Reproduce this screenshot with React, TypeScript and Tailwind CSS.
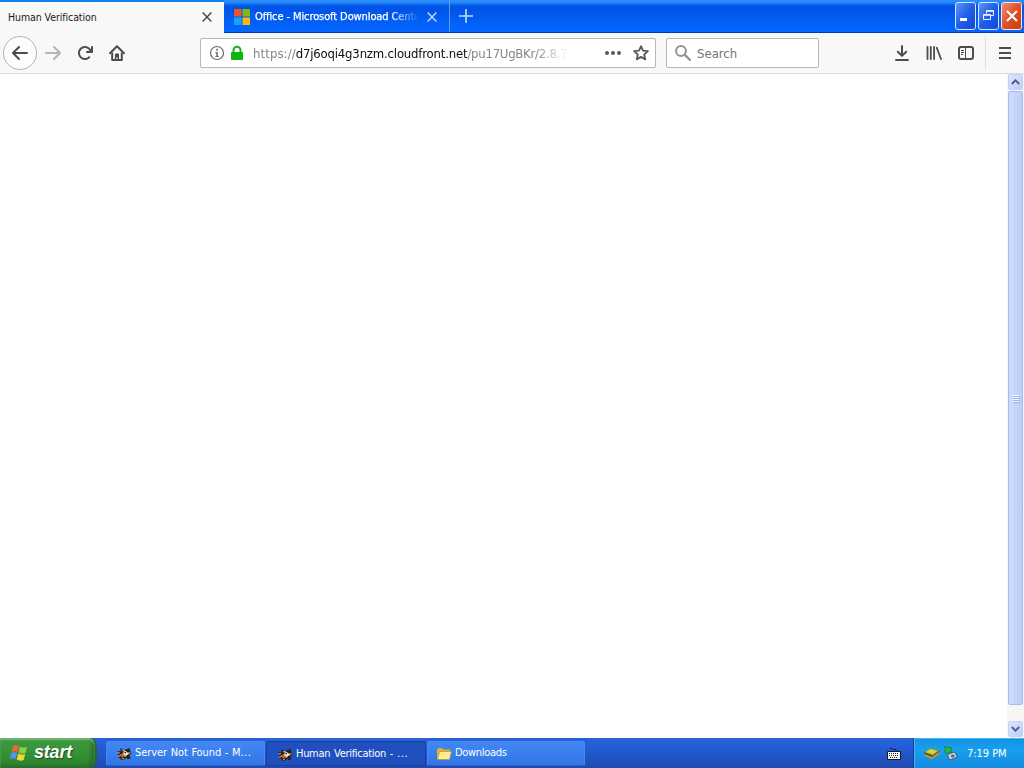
import type { ReactNode } from "react";

const TAHOMA = "font-['DejaVu_Sans_Condensed','DejaVu_Sans',sans-serif] [font-stretch:condensed]";

function Icon({ children, className = "" }: { children: ReactNode; className?: string }) {
  return (
    <svg viewBox="0 0 16 16" fill="currentColor" className={`size-4 shrink-0 ${className}`}>
      {children}
    </svg>
  );
}

function CloseIcon({ className = "" }: { className?: string }) {
  return (
    <svg viewBox="0 0 10 10" className={`size-[10px] shrink-0 ${className}`}>
      <path d="M.6.6l8.8 8.8M9.4.6L.6 9.4" stroke="currentColor" strokeWidth="1.4" />
    </svg>
  );
}

function TabStrip() {
  return (
    <div className="flex h-[33px] shrink-0 border-b border-[#003bb0] bg-linear-to-b from-[#2b8dfb] from-5% via-[#0052e4] via-20% to-[#0465fe] to-90%">
      <div className="-mb-px flex w-[224px] items-center border-t-2 border-[#1380ee] bg-[#f8f8f9] pb-px pl-2 pr-3">
        <span className="w-[194px] pt-[2px] text-[10.5px] tracking-[-0.08px] text-[#18181a]">Human Verification</span>
        <CloseIcon className="text-[#444]" />
      </div>
      <div className="flex w-[226px] items-center border-r border-[#5b9af8] pl-[10px] pr-3 pt-px">
        <svg viewBox="0 0 16 16" className="mr-[5px] size-4 shrink-0">
          <path d="M0 0h7.5v7.5H0z" fill="#ee5230" />
          <path d="M8.5 0H16v7.5H8.500z" fill="#7eba12" />
          <path d="M0 8.500h7.500V16H0z" fill="#16a4ef" />
          <path d="M8.500 8.500H16V16H8.500z" fill="#fbb80d" />
        </svg>
        <span className="mr-[8px] w-[164px] overflow-hidden whitespace-nowrap pt-[2px] text-[11px] tracking-[-0.1px] text-white [-webkit-text-stroke:0.25px_white] [mask-image:linear-gradient(to_right,black_82%,transparent)]">
          Office - Microsoft Download Center
        </span>
        <CloseIcon className="text-[#c5dcff]" />
      </div>
      <svg viewBox="0 0 14 14" className="ml-[9px] mt-[9px] size-[14px]">
        <path d="M7 0v14M0 7h14" stroke="#c5dcff" strokeWidth="1.6" />
      </svg>
      <div className="ml-auto mr-[2px] mt-[2px] flex gap-[2px]">
        <div className="h-7 w-[21px] rounded-[3px] border border-[#d7e5ff] bg-linear-to-br from-[#5b93fa] via-[#205de8] to-[#0f4bd6]">
          <div className="ml-1 mt-[15px] h-[3px] w-[7px] bg-white" />
        </div>
        <div className="flex h-7 w-[21px] items-center justify-center rounded-[3px] border border-[#d7e5ff] bg-linear-to-br from-[#5b93fa] via-[#205de8] to-[#0f4bd6]">
          <svg viewBox="0 0 11 11" className="mb-px size-[11px]">
            <path d="M3.500 3.500v-3h7v5h-3M.5 4.500h7v5h-7zM.5 5.300h7M3.500 1.300h7" fill="none" stroke="#e9f1ff" />
          </svg>
        </div>
        <div className="flex h-7 w-[21px] items-center justify-center rounded-[3px] border border-[#ffe2da] bg-linear-to-br from-[#ee8f70] via-[#de5026] to-[#c93c11]">
          <svg viewBox="0 0 12 12" className="mb-px size-3">
            <path d="M1 1l10 10M11 1L1 11" stroke="white" strokeWidth="2.100" />
          </svg>
        </div>
      </div>
    </div>
  );
}

function Toolbar() {
  return (
    <div className="flex h-[41px] shrink-0 items-center border-b border-[#dcdcdd] bg-[#f8f8f9] text-[#4c4c4f]">
      <div className="ml-[3px] flex size-[34px] items-center justify-center rounded-full border border-[#b2b2b3] bg-[#fdfdfd]">
        <Icon>
          <path d="M15 7H3.414l4.293-4.293a1 1 0 0 0-1.414-1.414l-6 6a1 1 0 0 0 0 1.414l6 6a1 1 0 0 0 1.414-1.414L3.414 9H15a1 1 0 0 0 0-2z" />
        </Icon>
      </div>
      <Icon className="ml-2 -scale-x-100 text-[#b5b5b7]">
        <path d="M15 7H3.414l4.293-4.293a1 1 0 0 0-1.414-1.414l-6 6a1 1 0 0 0 0 1.414l6 6a1 1 0 0 0 1.414-1.414L3.414 9H15a1 1 0 0 0 0-2z" />
      </Icon>
      <Icon className="ml-4">
        <path d="M15 1a1 1 0 0 0-1 1v2.418A6.995 6.995 0 1 0 8 15a6.954 6.954 0 0 0 4.950-2.050 1 1 0 0 0-1.414-1.414A5.019 5.019 0 1 1 12.549 6H10a1 1 0 0 0 0 2h5a1 1 0 0 0 1-1V2a1 1 0 0 0-1-1z" />
      </Icon>
      <Icon className="ml-4">
        <path d="M1 8.200L8 1.300l7 6.900" fill="none" stroke="currentColor" strokeWidth="2" strokeLinecap="round" strokeLinejoin="round" />
        <path d="M3.200 7.500V15h9.600V7.500" fill="none" stroke="currentColor" strokeWidth="2" strokeLinejoin="round" />
        <path d="M6 15V9.500a1 1 0 0 1 1-1h2a1 1 0 0 1 1 1V15H8.700v-2.500H7.300V15z" />
      </Icon>

      <div className="ml-[75px] flex h-[30px] w-[456px] items-center rounded-[2px] border border-[#b7b7b8] bg-white pl-2">
        <Icon className="text-[#69696b]">
          <circle cx="8" cy="8" r="6.500" fill="none" stroke="currentColor" strokeWidth="1.200" />
          <circle cx="8" cy="4.800" r="1" />
          <path d="M6.400 6.900h2.400v4h1v1.200H6.300v-1.200h1V8h-.9z" />
        </Icon>
        <Icon className="ml-1 text-[#12b40f]">
          <path d="M4.500 8V5.200a3.500 3.500 0 0 1 7 0V8" fill="none" stroke="currentColor" strokeWidth="2" />
          <rect x="2" y="7" width="12" height="8" rx="1" />
        </Icon>
        <div className="ml-[8px] w-[316px] overflow-hidden whitespace-nowrap pt-[2px] text-[13px] text-[#858587] [mask-image:linear-gradient(to_right,black_89%,transparent)]">
          <span className="tracking-[0.1px]">https://</span>
          <span className="tracking-[-0.18px] text-[#0c0c0d]">d7j6oqi4g3nzm.cloudfront.net</span>
          <span className="tracking-[-0.25px]">/pu17UgBKr/2.8.7</span>
        </div>
        <Icon className="ml-[36px] text-[#59595b]">
          <circle cx="2" cy="8" r="2" />
          <circle cx="8" cy="8" r="2" />
          <circle cx="14" cy="8" r="2" />
        </Icon>
        <Icon className="ml-3 text-[#59595b]">
          <path d="M8 1.200l2 4.500 4.900.5-3.700 3.300 1.100 4.900L8 11.900l-4.300 2.500 1.100-4.900L1.100 6.200 6 5.700z" fill="none" stroke="currentColor" strokeWidth="1.800" strokeLinejoin="round" />
        </Icon>
      </div>

      <div className="ml-[10px] flex h-[30px] w-[153px] items-center rounded-[2px] border border-[#b7b7b8] bg-white pl-2 text-[13px] text-[#747476]">
        <svg viewBox="0 0 16 16" className="mr-[6px] size-4 text-[#929294]">
          <circle cx="6" cy="6" r="4.900" fill="none" stroke="currentColor" strokeWidth="2" />
          <path d="M9.600 9.600l5.400 5.400" stroke="currentColor" strokeWidth="2.300" strokeLinecap="round" />
        </svg>
        <span className="pt-[2px]">Search</span>
      </div>

      <Icon className="ml-[75px]">
        <path d="M8 1v9.500M3.800 6.700L8 10.900l4.200-4.200M2 15h12" fill="none" stroke="currentColor" strokeWidth="2" strokeLinecap="round" strokeLinejoin="round" />
      </Icon>
      <Icon className="ml-4">
        <path d="M1.500 2v12M4.800 2v12M8.100 2v12M10.800 2.800L15 14" fill="none" stroke="currentColor" strokeWidth="1.800" strokeLinecap="round" />
      </Icon>
      <Icon className="ml-4">
        <rect x="1" y="2" width="14" height="12" rx="2" fill="none" stroke="currentColor" strokeWidth="2" />
        <path d="M7.500 2v12M3 5.500h3M3 7.500h3M3 9.500h2" fill="none" stroke="currentColor" strokeWidth="1" />
      </Icon>
      <div className="ml-[11px] h-8 w-px bg-[#dededf]" />
      <Icon className="ml-[11px]">
        <path d="M3 3h10M3 8h10M3 13h10" stroke="currentColor" strokeWidth="2" strokeLinecap="square" />
      </Icon>
    </div>
  );
}

function ScrollButton({ down = false }: { down?: boolean }) {
  return (
    <div className="flex h-4 w-[15px] items-center justify-center rounded-[2px] border border-[#c3d1f8] bg-linear-to-br from-[#dce6fe] to-[#bccdfa]">
      <svg viewBox="0 0 9 6" className={down ? "h-[6px] w-[9px] rotate-180" : "h-[6px] w-[9px]"}>
        <path d="M.8 5l3.700-3.700L8.200 5" fill="none" stroke="#4a5f8c" strokeWidth="1.900" />
      </svg>
    </div>
  );
}

function ScrollBar() {
  return (
    <div className="ml-auto flex w-[17px] flex-col items-center bg-[#f7f6f2] pb-px">
      <ScrollButton />
      <div className="mt-px flex h-[614px] w-[15px] flex-col items-center justify-center gap-px rounded-[2px] border border-[#a5baf0] bg-linear-to-r from-[#d0dcfe] to-[#bdcdf9]">
        {[0, 1, 2, 3].map((i) => (
          <div key={i} className="h-px w-[7px] bg-[#eff4ff] shadow-[1px_1px_0_#9db3ed]" />
        ))}
      </div>
      <div className="mt-auto">
        <ScrollButton down />
      </div>
    </div>
  );
}

function RaccoonIcon() {
  return (
    <svg viewBox="0 0 16 16" className="size-4 shrink-0">
      <path d="M4 2l3 2 3-.5L13.500 2l.5 2.500L15.500 7l-2 2.500 1 3-3 .5-1-1.500-2.500 2H4l1-2-3 .5 1-2.500-2-1 2-1.500L1 5l4 .5z" fill="#2a1c17" />
      <path d="M4 9l3-2.500 4 2 2 .5-3 1.800-4 .7z" fill="#b0682c" />
      <path d="M1 7.200l3-.4M2 10.500l3-1.500M6 4.800l3-.3" stroke="#d0a478" strokeWidth="1.100" />
      <path d="M7.500 5.500L10 5l1.200 1.500L14 6l.5 1-2.500 1.500-2 1.200-2.500-1z" fill="#f8eddc" />
      <path d="M8.500 6H10v1.300H8.500zM12.300 6.300h1.200v1h-1.200zM11 9h1.200v1H11z" fill="#110d0c" />
      <path d="M6 12.500h2" stroke="#c0844a" />
    </svg>
  );
}

function TaskButton({ icon, label, className = "" }: { icon: ReactNode; label: ReactNode; className?: string }) {
  return (
    <div className={`flex h-[25px] items-center gap-[3px] rounded-[2px] border ${className}`}>
      {icon}
      <span className="whitespace-nowrap text-[11px] tracking-[-0.3px]">{label}</span>
    </div>
  );
}

const IDLE = "border-[#4787ef] border-b-[#2860cb] bg-linear-to-b from-[#4287f3] via-[#397fef] to-[#3475e3] pl-[9px]";

function TaskBar() {
  return (
    <div className="flex h-[30px] shrink-0 bg-linear-to-b from-[#2864d1] via-[#245fdb] via-20% to-[#1d4ab1] text-white">
      <div className="flex w-[97px] items-center rounded-r-[8px] border-r-2 border-[#276729] bg-linear-to-b from-[#3f9540] from-5% via-[#369537] via-40% to-[#2c812e] pl-[10px] shadow-[inset_0_2px_2px_#78b978,inset_-3px_-2px_4px_#23692b]">
        <svg viewBox="0 0 20 20" className="size-[20px] shrink-0">
          <path d="M3 3q3-2 6 0L7.500 9Q5 7.500 1.500 9z" fill="#ed6638" />
          <path d="M10 3.500q4 2 7 0L15.500 10q-4 1.500-7-.5z" fill="#8bcf43" />
          <path d="M1.200 10q3-1.500 6 0l-1.600 6Q3 14.500 0 16z" fill="#5592ed" />
          <path d="M8.200 10.500q3.500 2 7 .5l-1.500 6q-3.500 1.500-7-.5z" fill="#f8d437" />
        </svg>
        <span className="ml-[4px] pb-[2px] font-['Liberation_Sans',sans-serif] text-[18px] font-bold italic leading-none tracking-[-0.2px] [font-stretch:normal] [text-shadow:1px_1px_1px_#1d4d20]">
          start
        </span>
      </div>
      <div className="ml-[9px] flex gap-px pt-[3px]">
        <TaskButton
          className={`w-[159px] ${IDLE}`}
          icon={<RaccoonIcon />}
          label={
            <span className="tracking-[-0.08px] [word-spacing:0.6px]">
              Server Not Found - M<span className="tracking-[0.5px]">...</span>
            </span>
          }
        />
        <TaskButton
          className="w-[160px] border-[#173f9f] bg-[#1f50bd] pl-[10px] pt-[2px]"
          icon={<RaccoonIcon />}
          label={
            <span className="[word-spacing:1px]">
              Human Verification - <span className="tracking-[0.6px]">...</span>
            </span>
          }
        />
        <TaskButton
          className={`w-[158px] ${IDLE}`}
          label="Downloads"
          icon={
            <svg viewBox="0 0 16 16" className="-ml-px size-4 shrink-0">
              <path d="M1 3.500L2.500 2H6l1.500 1.500H14V12H1z" fill="#d9b33c" />
              <path d="M1.500 13.500l2-8H15.500l-2 8z" fill="#ffec91" stroke="#b5922c" strokeWidth=".7" />
            </svg>
          }
        />
      </div>
      <svg viewBox="0 0 14 12" className="ml-auto mr-[12px] mt-[10px] h-3 w-[14px]">
        <path d="M3 .5h2l1 1h3l1 1" fill="none" stroke="#0b1b46" />
        <path d="M.5 3.500h13v8H.5z" fill="#f4f4ee" stroke="#141b30" />
        <path d="M2 5.500h10M2 7.500h10M3 9.500h8" stroke="#202431" strokeDasharray="1 1" />
      </svg>
      <div className="flex w-[111px] items-center border-l border-[#123c8c] bg-linear-to-b from-[#1593e5] from-5% via-[#199fee] via-40% to-[#118bdf] pl-[10px] shadow-[inset_1px_1px_0_#42b7f6]">
        <svg viewBox="0 0 16 16" className="mb-px size-4">
          <path d="M0 7.500v1.500l8 4.500 7.500-6V6z" fill="#4f5c2c" />
          <path d="M0 9l8 3.300 7.500-5.300v1.800L8 14 .5 10.500z" fill="#f0912a" />
          <path d="M0 7l6-4 9.500 2.500L9 10.500z" fill="#8d9a35" />
          <path d="M2 7l4.500-3 7 2L8.700 9.300z" fill="#ccd64e" />
        </svg>
        <svg viewBox="0 0 16 16" className="ml-[2px] size-4">
          <path d="M5.500 9.500L12.500 7l3 5-8 3z" fill="#d5dce3" stroke="#45576b" />
          <path d="M8.500 10.500l3.200-1.200 1.300 2.200-3.300 1.200z" fill="#356d8a" />
          <path d="M2 1.500L9.500 3v4.500L8 6.700 5.500 9 2 6.500l2-1.800z" fill="#2cb544" stroke="#147027" strokeWidth=".6" />
        </svg>
        <span className="ml-[9px] whitespace-nowrap pt-[2px] text-[11px] tracking-[-0.04px]">7:19 PM</span>
      </div>
    </div>
  );
}

export default function App() {
  return (
    <div className={`flex h-screen w-screen flex-col overflow-hidden bg-white ${TAHOMA}`}>
      <TabStrip />
      <Toolbar />
      <main className="flex min-h-0 flex-1 bg-white">
        <ScrollBar />
      </main>
      <TaskBar />
    </div>
  );
}
